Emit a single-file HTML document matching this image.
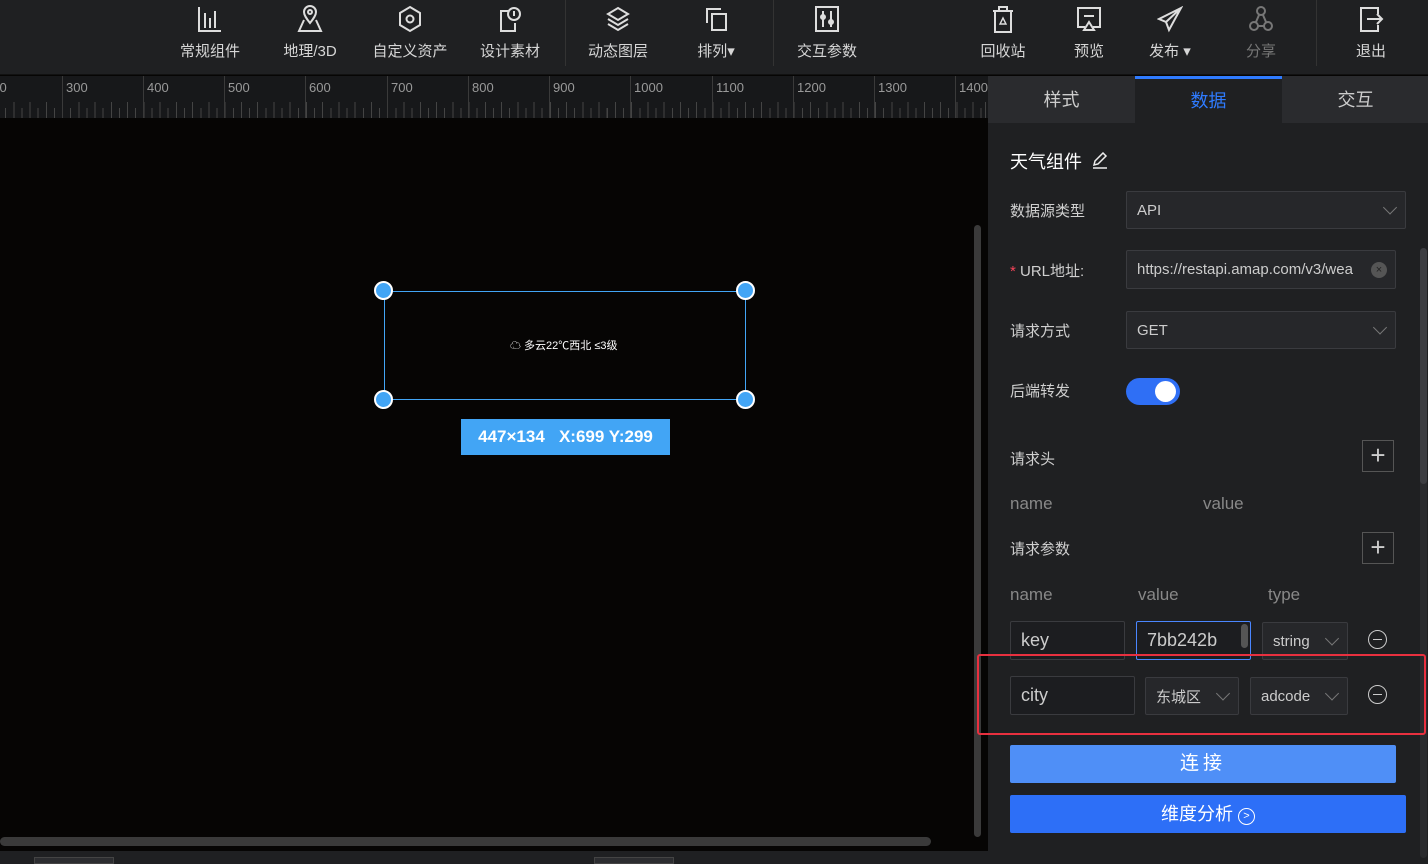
<!DOCTYPE html>
<html><head><meta charset="utf-8"><style>
*{margin:0;padding:0;box-sizing:border-box}
body{width:1428px;height:864px;overflow:hidden;background:#060504;font-family:"Liberation Sans","Noto Sans CJK SC",sans-serif;position:relative;color:#ddd}
.abs{position:absolute}
#top{left:0;top:0;width:1428px;height:75px;background:#1f2022;border-bottom:1px solid #111}
.tb{position:absolute;top:0;width:100px;margin-left:-50px;text-align:center;color:#d6d6d6;font-size:15px}
.tb svg{position:absolute;top:5px;left:37px}
.tb span{position:absolute;top:40px;left:0;width:100%}
.dv{position:absolute;top:0;width:1px;height:66px;background:#333}
#ruler{left:0;top:76px;width:988px;height:42px;background:#17181a;overflow:hidden}
.rl{position:absolute;top:0;height:42px;border-left:1px solid #3a3a3a;font-size:13px;color:#999;padding:4px 0 0 3px;font-family:"Liberation Sans",sans-serif}
#ticks{position:absolute;left:0;top:32px;width:988px;height:10px;background:repeating-linear-gradient(90deg,#444 0 1px,transparent 1px 8.13px);background-position:-3px 0}
#ticks2{position:absolute;left:0;top:26px;width:988px;height:16px;background:repeating-linear-gradient(90deg,#444 0 1px,transparent 1px 16.26px);background-position:-3px 0}
#panel{left:988px;top:76px;width:440px;height:788px;background:#1f2022}
.tab{position:absolute;top:0;height:47px;width:147px;background:#2a2b2e;text-align:center;line-height:48px;font-size:18px;color:#ccc}
.lbl{position:absolute;left:22px;font-size:15px;color:#cfcfcf}
.inp{position:absolute;border:1px solid #3a3b3f;background:#26272a;border-radius:2px;font-size:15px;color:#ccc;padding-left:10px;display:flex;align-items:center}
.chev{position:absolute;right:10px;top:50%;width:10px;height:10px;border-right:1px solid #777;border-bottom:1px solid #777;transform:translateY(-75%) rotate(45deg)}
.plus{position:absolute;width:32px;height:32px;border:1px solid #555;color:#ccc;font-size:26px;line-height:28px;text-align:center;font-weight:300}
.minus{position:absolute;width:19px;height:19px;border:1.5px solid #ccc;border-radius:50%}
.minus:after{content:"";position:absolute;left:4px;right:4px;top:7.5px;height:1.5px;background:#ccc}
.h{position:absolute;font-size:17px;color:#888}
.dot{position:absolute;width:19px;height:19px;border-radius:50%;background:#42a5f5;border:2px solid #fff}
</style></head><body>
<div id="top" class="abs">
 <div class="tb" style="left:210px"><svg width="26" height="28" viewBox="0 0 26 28" fill="none" stroke="#ddd" stroke-width="2"><path d="M2 2v24h22M8 8v15M13 13v10M18 6v17"/></svg><span>常规组件</span></div>
 <div class="tb" style="left:310px"><svg width="26" height="28" viewBox="0 0 26 28" fill="none" stroke="#ddd" stroke-width="2"><path d="M13 18c-4-5-6-8-6-11a6 6 0 0112 0c0 3-2 6-6 11z"/><circle cx="13" cy="7" r="2"/><path d="M7 15l-5 11h22l-5-11"/></svg><span>地理/3D</span></div>
 <div class="tb" style="left:410px"><svg width="26" height="28" viewBox="0 0 26 28" fill="none" stroke="#ddd" stroke-width="2"><path d="M13 2l10 6v12l-10 6-10-6V8z"/><circle cx="13" cy="14" r="3.5"/></svg><span>自定义资产</span></div>
 <div class="tb" style="left:510px"><svg width="26" height="28" viewBox="0 0 26 28" fill="none" stroke="#ddd" stroke-width="2"><path d="M12 6H4v20h14v-8"/><circle cx="17" cy="9" r="6"/><path d="M17 6v5"/></svg><span>设计素材</span></div>
 <div class="dv" style="left:565px"></div>
 <div class="tb" style="left:618px"><svg width="26" height="28" viewBox="0 0 26 28" fill="none" stroke="#ddd" stroke-width="2"><path d="M13 3l10 6-10 6-10-6z"/><path d="M3 14l10 6 10-6M3 19l10 6 10-6"/></svg><span>动态图层</span></div>
 <div class="tb" style="left:716px"><svg width="26" height="28" viewBox="0 0 26 28" fill="none" stroke="#ddd" stroke-width="2"><path d="M4 18V4h14M9 9h14v16H9z"/></svg><span>排列▾</span></div>
 <div class="dv" style="left:773px"></div>
 <div class="tb" style="left:827px"><svg width="26" height="28" viewBox="0 0 26 28" fill="none" stroke="#ddd" stroke-width="2"><rect x="2" y="2" width="22" height="24"/><path d="M9 6v16M17 6v16"/><circle cx="9" cy="12" r="2"/><circle cx="17" cy="17" r="2"/></svg><span>交互参数</span></div>
 <div class="tb" style="left:1003px"><svg width="26" height="28" viewBox="0 0 26 28" fill="none" stroke="#ddd" stroke-width="2"><path d="M3 6h20M9 6V2h8v4M5 6v21h16V6"/><path d="M13 13l-3 6h6z" stroke-width="1.4"/></svg><span>回收站</span></div>
 <div class="tb" style="left:1089px"><svg width="26" height="28" viewBox="0 0 26 28" fill="none" stroke="#ddd" stroke-width="2"><path d="M9 22H2V3h22v19h-7"/><path d="M8 11h10"/><path d="M13 17l-5 8h10z"/></svg><span>预览</span></div>
 <div class="tb" style="left:1170px"><svg width="26" height="28" viewBox="0 0 26 28" fill="none" stroke="#ddd" stroke-width="2"><path d="M24 3L2 14l7 3 3 8zM24 3L9 17"/></svg><span>发布 ▾</span></div>
 <div class="tb" style="left:1261px;color:#777"><svg width="26" height="28" viewBox="0 0 26 28" fill="none" stroke="#777" stroke-width="2"><circle cx="13" cy="6" r="4"/><circle cx="6" cy="21" r="4"/><circle cx="20" cy="21" r="4"/><path d="M11 10l-3 7M15 10l3 7M10 21h6"/></svg><span>分享</span></div>
 <div class="dv" style="left:1316px"></div>
 <div class="tb" style="left:1371px"><svg width="26" height="28" viewBox="0 0 26 28" fill="none" stroke="#ddd" stroke-width="2"><path d="M20 9V3H3v23h17v-6"/><path d="M9 14h15M19 9l5 5-5 5"/></svg><span>退出</span></div>
</div>
<div id="ruler" class="abs">
 <div id="ticks"></div><div id="ticks2"></div>
 <div class="rl" style="left:-19px">200</div>
 <div class="rl" style="left:62px">300</div>
 <div class="rl" style="left:143px">400</div>
 <div class="rl" style="left:224px">500</div>
 <div class="rl" style="left:305px">600</div>
 <div class="rl" style="left:387px">700</div>
 <div class="rl" style="left:468px">800</div>
 <div class="rl" style="left:549px">900</div>
 <div class="rl" style="left:630px">1000</div>
 <div class="rl" style="left:712px">1100</div>
 <div class="rl" style="left:793px">1200</div>
 <div class="rl" style="left:874px">1300</div>
 <div class="rl" style="left:955px">1400</div>
</div>
<div class="abs" style="left:384px;top:291px;width:362px;height:109px;border:1px solid #42a5f5"></div>
<div class="dot" style="left:374px;top:281px"></div><div class="dot" style="left:736px;top:281px"></div>
<div class="dot" style="left:374px;top:390px"></div><div class="dot" style="left:736px;top:390px"></div>
<div class="abs" style="left:510px;top:337px;font-size:11px;color:#fff">☁ 多云22℃西北 ≤3级</div>
<div class="abs" style="left:461px;top:419px;width:209px;height:36px;background:#42a5f5;color:#fff;font-weight:bold;font-size:17px;line-height:36px;text-align:center">447×134 &nbsp; X:699 Y:299</div>
<div class="abs" style="left:974px;top:225px;width:7px;height:612px;background:#3a3a3a;border-radius:4px"></div>
<div class="abs" style="left:0;top:837px;width:931px;height:9px;background:#3a3a3a;border-radius:5px"></div>
<div class="abs" style="left:0;top:851px;width:988px;height:13px;background:#1f2022"></div>
<div class="abs" style="left:34px;top:857px;width:80px;height:7px;background:#2c2d30;border:1px solid #444"></div>
<div class="abs" style="left:594px;top:857px;width:80px;height:7px;background:#2c2d30;border:1px solid #444"></div>
<div id="panel" class="abs">
 <div class="tab" style="left:0">样式</div>
 <div class="tab" style="left:147px;background:#1f2022;color:#2f7bff;border-top:3px solid #2f7bff;line-height:44px">数据</div>
 <div class="tab" style="left:294px">交互</div>
 <div class="abs" style="left:432px;top:172px;width:7px;height:610px;background:#2a2b2e;border-radius:4px"></div>
 <div class="abs" style="left:432px;top:172px;width:7px;height:236px;background:#3d3e42;border-radius:4px"></div>
 <div class="abs" style="left:22px;top:72px;font-size:18px;color:#fff">天气组件 <svg width="17" height="17" viewBox="0 0 17 17" fill="none" stroke="#eee" stroke-width="1.5" style="vertical-align:-1px;margin-left:4px"><path d="M2 16h14M3 13l1-4 8-8 3 3-8 8z"/></svg></div>
 <div class="lbl" style="top:124px">数据源类型</div>
 <div class="inp" style="left:138px;top:115px;width:280px;height:38px">API<div class="chev"></div></div>
 <div class="lbl" style="top:184px"><span style="color:#f5455a">*</span> URL地址:</div>
 <div class="inp" style="left:138px;top:174px;width:270px;height:39px;overflow:hidden;white-space:nowrap;padding-right:30px">https://restapi.amap.com/v3/wea<div class="abs" style="right:8px;top:11px;width:16px;height:16px;border-radius:50%;background:#555;color:#222;font-size:11px;line-height:16px;text-align:center">×</div></div>
 <div class="lbl" style="top:244px">请求方式</div>
 <div class="inp" style="left:138px;top:235px;width:270px;height:38px">GET<div class="chev"></div></div>
 <div class="lbl" style="top:304px">后端转发</div>
 <div class="abs" style="left:138px;top:302px;width:54px;height:27px;border-radius:14px;background:#2f6ff5"><div class="abs" style="right:4px;top:3px;width:21px;height:21px;border-radius:50%;background:#fff"></div></div>
 <div class="lbl" style="top:372px">请求头</div>
 <div class="plus" style="left:374px;top:364px">+</div>
 <div class="h" style="left:22px;top:418px">name</div><div class="h" style="left:215px;top:418px">value</div>
 <div class="lbl" style="top:462px">请求参数</div>
 <div class="plus" style="left:374px;top:456px">+</div>
 <div class="h" style="left:22px;top:509px">name</div><div class="h" style="left:150px;top:509px">value</div><div class="h" style="left:280px;top:509px">type</div>
 <div class="inp" style="left:22px;top:545px;width:115px;height:39px;background:#1c1d20;font-size:18px">key</div>
 <div class="inp" style="left:148px;top:545px;width:115px;height:39px;background:#1c1d20;border-color:#4a86ff;font-size:18px">7bb242b<div class="abs" style="right:2px;top:2px;width:7px;height:24px;background:#555;border-radius:4px"></div></div>
 <div class="inp" style="left:274px;top:546px;width:86px;height:38px;font-size:15px">string<div class="chev"></div></div>
 <div class="minus" style="left:380px;top:554px"></div>
 <div class="inp" style="left:22px;top:600px;width:125px;height:39px;background:#1c1d20;font-size:18px">city</div>
 <div class="inp" style="left:157px;top:601px;width:94px;height:38px">东城区<div class="chev"></div></div>
 <div class="inp" style="left:262px;top:601px;width:98px;height:38px">adcode<div class="chev"></div></div>
 <div class="minus" style="left:380px;top:609px"></div>
 <div class="abs" style="left:22px;top:669px;width:386px;height:38px;background:#4f8ff7;border-radius:2px;color:#fff;font-size:19px;text-align:center;line-height:38px;letter-spacing:4px">连接</div>
 <div class="abs" style="left:22px;top:719px;width:396px;height:38px;background:#2d6ff7;border-radius:2px;color:#fff;font-size:18px;text-align:center;line-height:38px">维度分析 <span style="display:inline-block;width:17px;height:17px;border:1.5px solid #fff;border-radius:50%;font-size:11px;line-height:14px;vertical-align:1px">&gt;</span></div>
</div>
<div class="abs" style="left:977px;top:654px;width:449px;height:81px;border:2px solid #e8303f;border-radius:3px"></div>
</body></html>
